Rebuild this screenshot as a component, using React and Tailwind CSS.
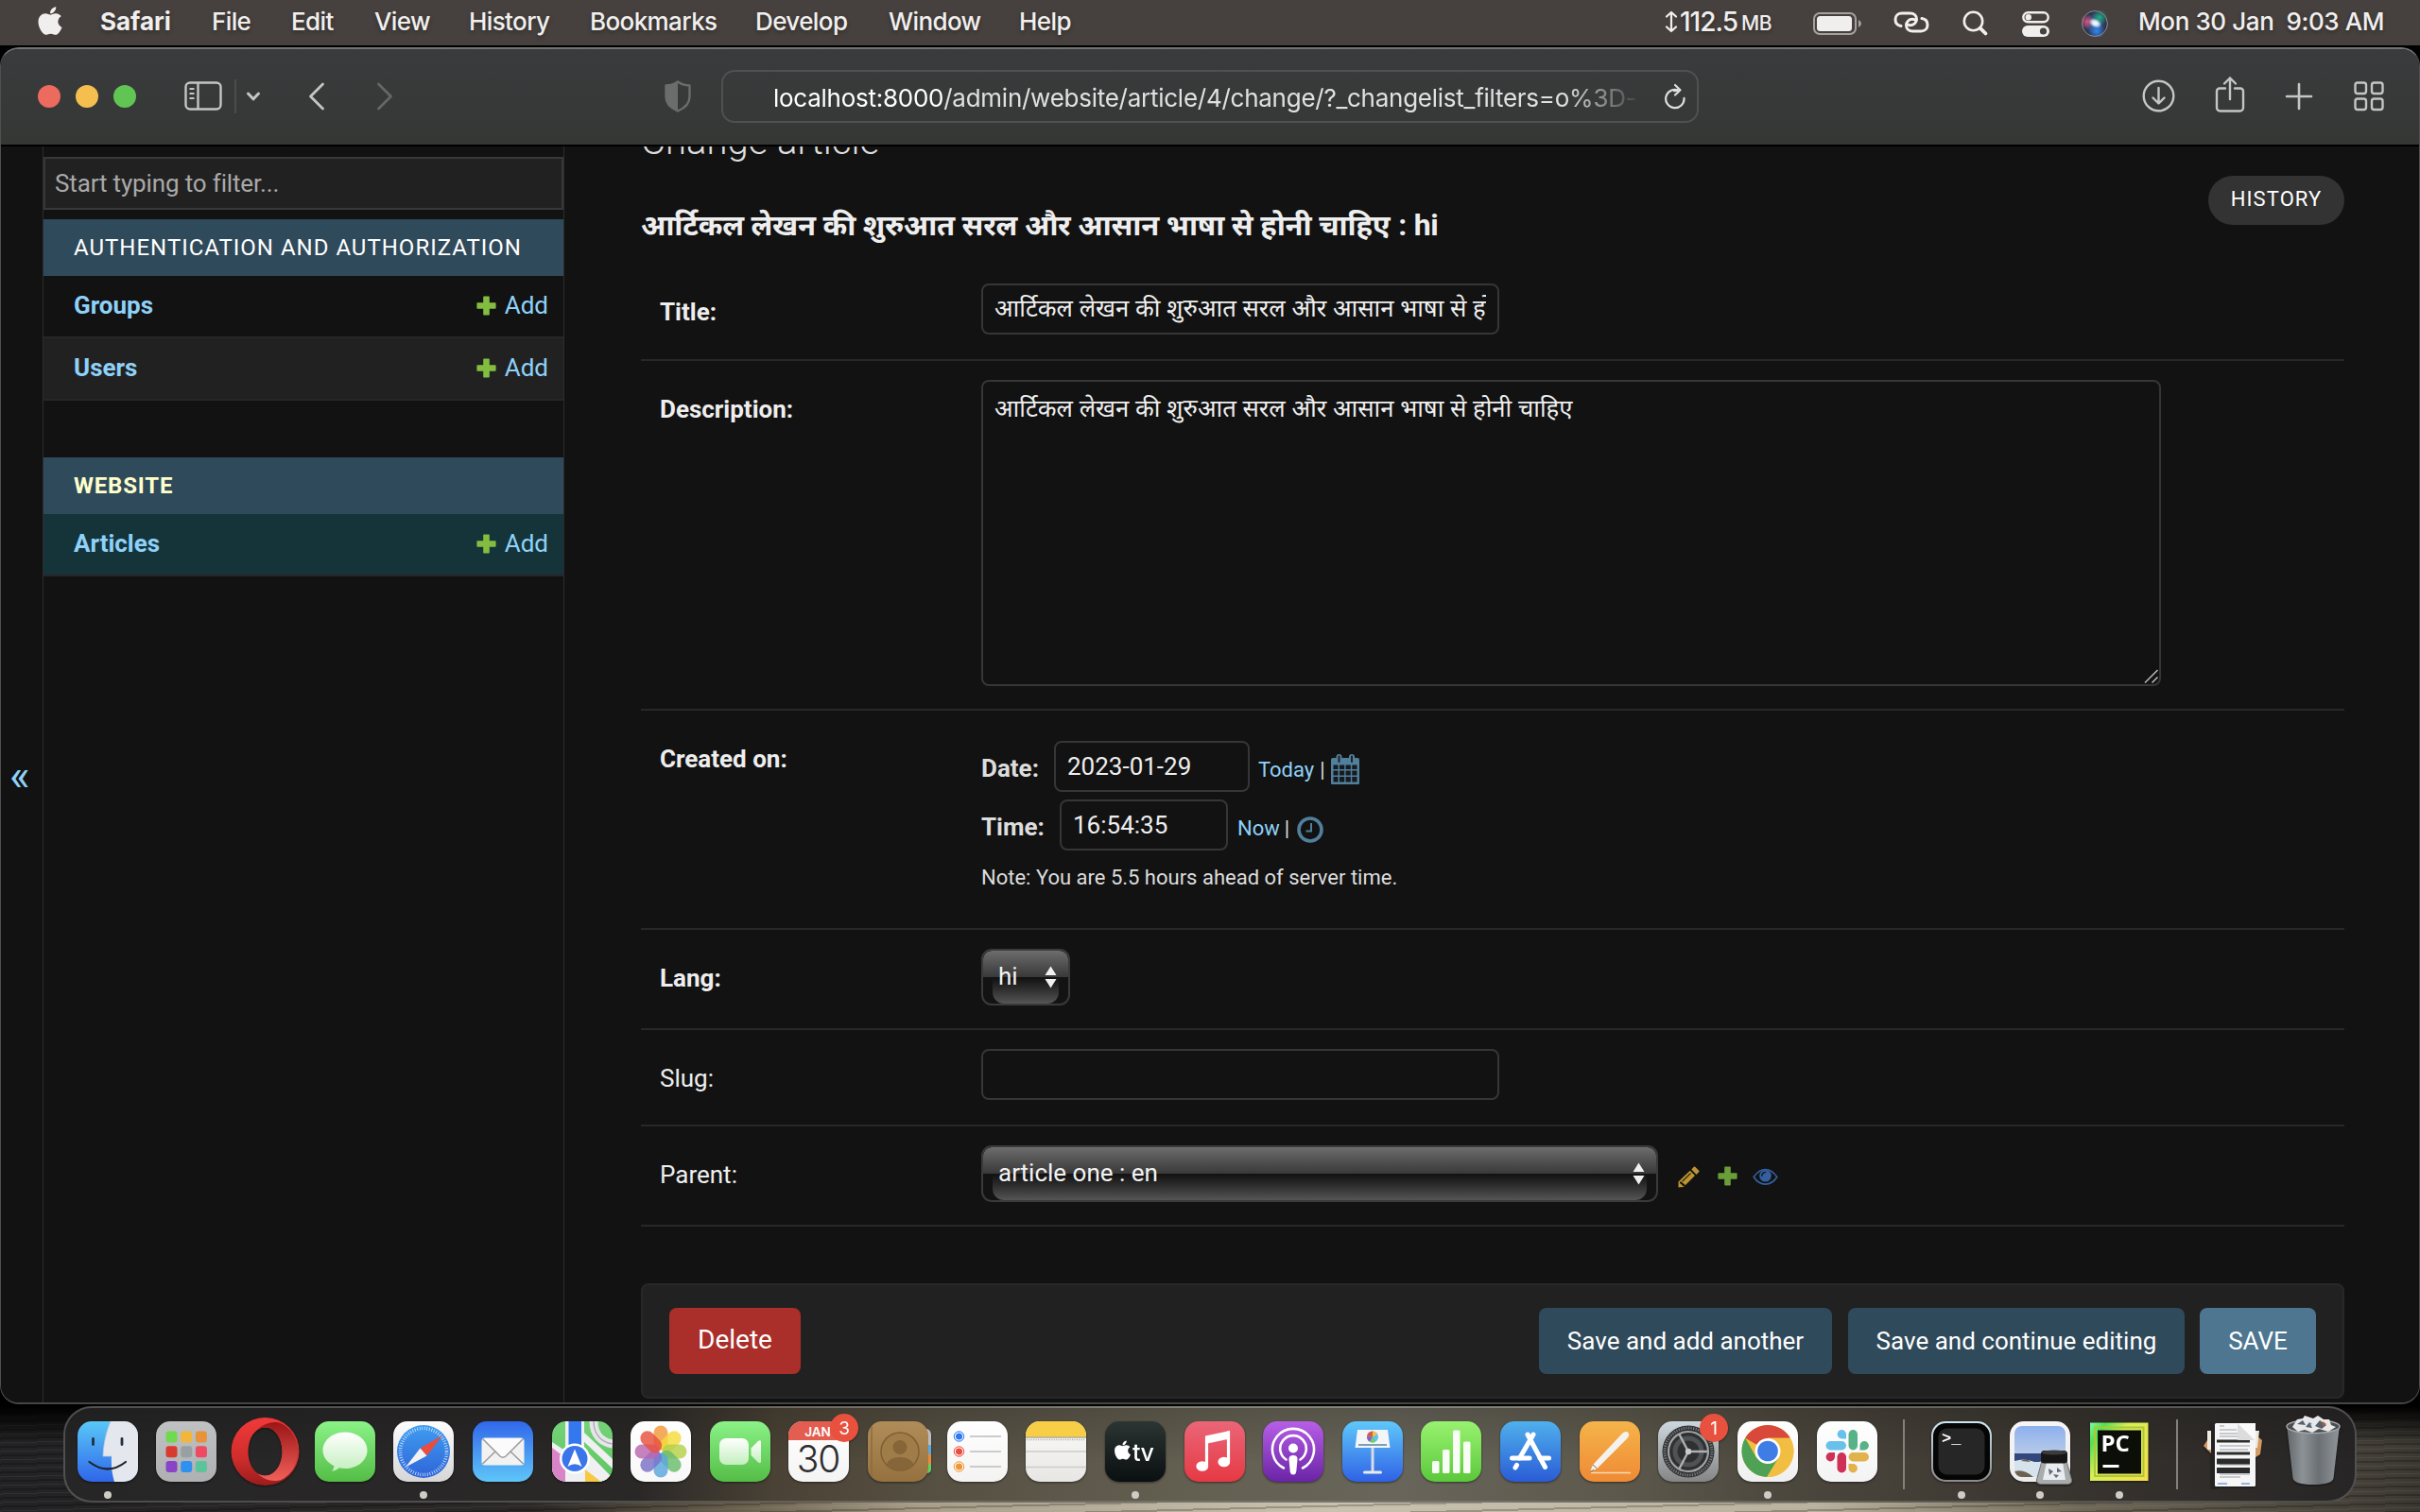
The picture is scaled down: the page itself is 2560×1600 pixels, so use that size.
import React from "react";
import { FaApple } from "react-icons/fa";

const HINDI = "आर्टिकल लेखन की शुरुआत सरल और आसान भाषा से होनी चाहिए";

/* ---------- macOS menu bar ---------- */

function MenuBar() {
  return (
    <div className="flex h-[48px] shrink-0 items-center bg-[#46413e] font-['Inter'] text-[26px] leading-[46px] text-[#f1efee] [text-shadow:0_2px_4px_rgba(0,0,0,0.35)]">
      <FaApple className="-mt-[4px] ml-[37px] h-[34px] w-[32px] shrink-0" />
      <div className="-mt-[2px] ml-[37px] flex whitespace-nowrap font-medium tracking-[-0.6px]">
        <span className="w-[118px] font-bold tracking-[0px]">Safari</span>
        <span className="w-[84px]">File</span>
        <span className="w-[88px]">Edit</span>
        <span className="w-[100px]">View</span>
        <span className="w-[128px]">History</span>
        <span className="w-[175px]">Bookmarks</span>
        <span className="w-[141px]">Develop</span>
        <span className="w-[138px]">Window</span>
        <span>Help</span>
      </div>
      <div className="-mt-[2px] ml-auto mr-[38px] flex items-center">
        <svg width="14" height="24" viewBox="0 0 14 24" fill="none" stroke="currentColor" strokeWidth="2.2" strokeLinecap="round" strokeLinejoin="round">
          <path d="M7 2V22M2 6.5L7 2l5 4.5M2 17.5L7 22l5-4.5" />
        </svg>
        <span className="ml-[2px] w-[65px] whitespace-nowrap text-[28px] font-medium tracking-[-1px]">112.5</span>
        <span className="mt-[4px] w-[76px] text-[21px] font-medium tracking-[-0.4px]">MB</span>
        <svg className="mt-[3px]" width="52" height="24" viewBox="0 0 52 24">
          <rect x="1" y="1" width="44" height="22" rx="6" fill="none" stroke="#a5a19f" strokeWidth="2" />
          <rect x="4" y="4" width="37" height="16" rx="3.5" fill="#f1efee" />
          <path d="M48 8q3 1.500 3 4t-3 4z" fill="#a5a19f" />
        </svg>
        <svg className="ml-[33px] mt-[1px]" width="38" height="24" viewBox="0 0 38 24" fill="none" stroke="currentColor" strokeWidth="3" strokeLinecap="round">
          <path d="M8 15.500C4 15 2 12 2 8.500C2 4.500 5 2 9 2h8.500c4.500 0 7 3 7 6.300c0 3.500-2.800 6.400-6.500 6.400c-1.800 0-3-.5-3.800-1.300" />
          <path d="M30 7.500c4 .5 6 3.500 6 7c0 4-3 6.500-7 6.500h-8.500c-4.500 0-7-3-7-6.300c0-3.500 2.800-6.400 6.500-6.400c1.800 0 3 .5 3.800 1.300" />
        </svg>
        <svg className="ml-[35px] mt-[3px]" width="28" height="28" viewBox="0 0 28 28" fill="none" stroke="currentColor" strokeLinecap="round">
          <circle cx="11.500" cy="11.500" r="9.700" strokeWidth="2.600" />
          <path d="M18.800 18.800L24.500 24.500" strokeWidth="3.800" />
        </svg>
        <svg className="ml-[35px] mt-[4px]" width="29" height="27" viewBox="0 0 29 27">
          <rect x="1.300" y="1.300" width="26.400" height="10" rx="5" fill="none" stroke="#f1efee" strokeWidth="2.400" />
          <circle cx="6.800" cy="6.300" r="3.200" fill="#f1efee" />
          <rect x="0" y="15" width="29" height="12" rx="6" fill="#f1efee" />
          <circle cx="22.500" cy="21" r="3.600" fill="#46413e" />
        </svg>
        <svg className="ml-[34px] mt-[3px]" width="28" height="28" viewBox="0 0 28 28">
          <defs>
            <radialGradient id="siriBase" cx="50%" cy="50%" r="50%">
              <stop offset="0" stopColor="#3c6aa8" />
              <stop offset="1" stopColor="#2a2c40" />
            </radialGradient>
            <radialGradient id="siriPink">
              <stop offset="0" stopColor="#e0507e" />
              <stop offset="1" stopColor="#e0507e" stopOpacity="0" />
            </radialGradient>
            <radialGradient id="siriGreen">
              <stop offset="0" stopColor="#1fae84" />
              <stop offset="1" stopColor="#1fae84" stopOpacity="0" />
            </radialGradient>
            <radialGradient id="siriBlue">
              <stop offset="0" stopColor="#2f86f5" />
              <stop offset="1" stopColor="#2f86f5" stopOpacity="0" />
            </radialGradient>
            <radialGradient id="siriGlow">
              <stop offset="0" stopColor="#ffffff" />
              <stop offset=".45" stopColor="#e6f3fb" stopOpacity=".9" />
              <stop offset="1" stopColor="#bfe4f5" stopOpacity="0" />
            </radialGradient>
          </defs>
          <circle cx="14" cy="14" r="13.500" fill="url(#siriBase)" />
          <circle cx="6" cy="12" r="8" fill="url(#siriPink)" />
          <circle cx="19" cy="7.500" r="8.500" fill="url(#siriGreen)" />
          <circle cx="16" cy="22" r="9" fill="url(#siriBlue)" />
          <ellipse cx="14.500" cy="13.500" rx="7.500" ry="5" fill="url(#siriGlow)" transform="rotate(25 14.500 13.500)" />
          <circle cx="14" cy="14" r="13.400" fill="none" stroke="#8c8f97" strokeWidth="1" />
        </svg>
        <span className="ml-[32px] w-[260px] whitespace-pre font-medium tracking-[-0.4px]">Mon 30 Jan  9:03 AM</span>
      </div>
    </div>
  );
}

/* ---------- Safari toolbar ---------- */

function Toolbar() {
  return (
    <div className="flex h-[103px] shrink-0 items-center border-b-2 border-black bg-linear-to-b from-[#3a3b3d] to-[#353735] pb-[2px] text-[#c4c5c5]">
      <div className="ml-[39px] flex gap-[16px]">
        <div className="h-[24px] w-[24px] rounded-full bg-[#ec6a5e]" />
        <div className="h-[24px] w-[24px] rounded-full bg-[#f4bf4f]" />
        <div className="h-[24px] w-[24px] rounded-full bg-[#61c554]" />
      </div>
      <svg className="ml-[51px]" width="40" height="32" viewBox="0 0 40 32" fill="none" stroke="currentColor" strokeWidth="2.400">
        <rect x="1.500" y="1.500" width="37" height="28" rx="4.500" />
        <path d="M14.500 1.500v28" />
        <path d="M5.500 8h5M5.500 13h5M5.500 18h5" strokeWidth="2" />
      </svg>
      <div className="ml-[13px] h-[36px] w-[2px] bg-[#4b4d4d]" />
      <svg className="ml-[10px]" width="16" height="12" viewBox="0 0 16 12" fill="none" stroke="currentColor" strokeWidth="3" strokeLinecap="round" strokeLinejoin="round">
        <path d="M2.500 3L8 8.800L13.500 3" />
      </svg>
      <svg className="ml-[49px]" width="20" height="32" viewBox="0 0 20 32" fill="none" stroke="currentColor" strokeWidth="2.800" strokeLinecap="round" strokeLinejoin="round">
        <path d="M16.500 3L3.500 16L16.500 29" />
      </svg>
      <svg className="ml-[52px] text-[#656767]" width="20" height="32" viewBox="0 0 20 32" fill="none" stroke="currentColor" strokeWidth="2.800" strokeLinecap="round" strokeLinejoin="round">
        <path d="M3.500 3L16.500 16L3.500 29" />
      </svg>
      <svg className="ml-[285px] text-[#6b6d6d]" width="30" height="34" viewBox="0 0 30 34">
        <path d="M15 1.500c4 3 8 3.800 12.500 4v12c0 7.500-5.500 12-12.500 15C8 29.500 2.500 25 2.500 17.500v-12C7 5.300 11 4.500 15 1.500z" fill="none" stroke="currentColor" strokeWidth="2.400" strokeLinejoin="round" />
        <path d="M15 1.500v31C8 29.500 2.500 25 2.500 17.500v-12C7 5.300 11 4.500 15 1.500z" fill="currentColor" />
      </svg>
      <div className="ml-[31px] flex h-[56px] w-[1034px] items-center rounded-[14px] border-2 border-[#4f5151]">
        <div className="ml-[53px] mt-[4px] w-[920px] overflow-hidden whitespace-nowrap font-['Inter'] text-[26px] leading-[40px] tracking-[-0.26px] text-[#dfe0e0] [mask-image:linear-gradient(to_right,black_91%,transparent)]">
          <span className="text-white">localhost:8000</span>/admin/website/article/4/change/?_changelist_filters=o%3D-
        </div>
        <svg className="mt-[1px] ml-[22px]" width="24" height="28" viewBox="0 0 24 28" fill="none" stroke="#dcdddd" strokeWidth="2.200" strokeLinecap="round" strokeLinejoin="round">
          <path d="M21.500 16.500A9.700 9.700 0 1 1 16.500 8H11.500" transform="rotate(-4 12 16)" />
          <path d="M12 2l5.500 5.200L12 12.500" />
        </svg>
      </div>
      <div className="ml-auto mr-[37px] flex items-center">
        <svg width="35" height="35" viewBox="0 0 35 35" fill="none" stroke="currentColor" strokeWidth="2.400" strokeLinecap="round" strokeLinejoin="round">
          <circle cx="17.500" cy="17.500" r="15.800" />
          <path d="M17.500 9v16M11.500 19.500l6 6 6-6" />
        </svg>
        <svg className="-mt-[4px] ml-[42px]" width="32" height="40" viewBox="0 0 32 40" fill="none" stroke="currentColor" strokeWidth="2.400" strokeLinecap="round" strokeLinejoin="round">
          <path d="M11 13.500H5a3 3 0 0 0-3 3V34a3.500 3.500 0 0 0 3.500 3.500h21A3.500 3.500 0 0 0 30 34V16.500a3 3 0 0 0-3-3h-6" />
          <path d="M16 25V2.500M10 8.500l6-6 6 6" />
        </svg>
        <svg className="ml-[42px]" width="30" height="30" viewBox="0 0 30 30" fill="none" stroke="currentColor" strokeWidth="2.600" strokeLinecap="round">
          <path d="M15 2v26M2 15h26" />
        </svg>
        <svg className="ml-[43px]" width="32" height="32" viewBox="0 0 32 32" fill="none" stroke="currentColor" strokeWidth="2.400">
          <rect x="1.500" y="1.500" width="11.500" height="11.500" rx="2.500" />
          <rect x="19" y="1.500" width="11.500" height="11.500" rx="2.500" />
          <rect x="1.500" y="18.500" width="11.500" height="11.500" rx="2.500" />
          <rect x="19" y="18.500" width="11.500" height="11.500" rx="2.500" />
        </svg>
      </div>
    </div>
  );
}

/* ---------- Django admin sidebar ---------- */

function PlusIcon({ className }) {
  return (
    <svg className={className} width="21" height="21" viewBox="0 0 21 21" fill="currentColor">
      <path d="M8 0.500h5a.8.8 0 0 1 .8.800V7.200h6a.8.8 0 0 1 .8.800v5a.8.8 0 0 1-.8.800h-6v6a.8.8 0 0 1-.8.700H8a.8.8 0 0 1-.8-.7v-6h-6A.8.8 0 0 1 .4 13V8a.8.8 0 0 1 .8-.8h6V1.300A.8.8 0 0 1 8 .5z" />
    </svg>
  );
}

function ModelRow({ name, tone }) {
  return (
    <div className={"flex h-[66px] items-center justify-between border-b-2 border-[#272727] pb-[2px] pl-[32px] pr-[16px] text-[#8fd1f8] " + tone}>
      <span className="text-[26px] font-bold">{name}</span>
      <span className="flex items-center text-[26px]">
        <PlusIcon className="mr-[9px] text-[#83bd40]" />
        Add
      </span>
    </div>
  );
}

function Sidebar() {
  return (
    <div className="flex w-[552px] shrink-0 flex-col border-x border-[#2c2c2c] pt-[11px]">
      <div className="flex h-[56px] items-center border-2 border-[#383838] bg-[#212121] pl-[10px] text-[26px] tracking-[-0.15px] text-[#a9a9a9]">
        Start typing to filter...
      </div>
      <div className="mt-[10px] flex h-[60px] items-center bg-[#2f4a5b] pl-[32px] text-[24px] tracking-[1px] text-white">
        AUTHENTICATION AND AUTHORIZATION
      </div>
      <ModelRow name="Groups" tone="bg-[#121212]" />
      <ModelRow name="Users" tone="bg-[#212121]" />
      <div className="mt-[60px] flex h-[60px] items-center bg-[#2f4a5b] pl-[32px] text-[24px] font-bold tracking-[0.8px] text-[#ffffcc]">
        WEBSITE
      </div>
      <ModelRow name="Articles" tone="bg-[#143439]" />
    </div>
  );
}

/* ---------- Change form ---------- */

function Row({ label, bold, height, children }) {
  return (
    <div className={"flex border-b-2 border-[#282828] pl-[20px] " + height}>
      <div className={"w-[340px] shrink-0 pt-[31px] text-[26px] leading-[40px] text-[#eeeeee] " + (bold ? "font-bold" : "")}>{label}</div>
      {children}
    </div>
  );
}

function GlossySelect({ value, width }) {
  return (
    <div className={"relative h-[60px] overflow-hidden rounded-[11px] border-2 border-[#3a3a3a] bg-[#131313] " + width}>
      <div className="h-[28px] rounded-t-[9px] bg-linear-to-b from-[#6d6d6d] to-[#393939]" />
      <div className="mx-[10px] h-[28px] rounded-b-[12px] bg-linear-to-b from-[#111111] to-[#555555]" />
      <div className="absolute inset-0 flex items-center justify-between pb-[1px] pl-[16px] pr-[12px] text-[26px] text-[#f2f2f2]">
        <span className="-mt-[1px]">{value}</span>
        <svg className="mt-[1px]" width="13" height="24" viewBox="0 0 13 24" fill="#f0f0f0">
          <path d="M6.500 0.500L12.500 10H.5zM6.500 23.500L.5 14h12z" />
        </svg>
      </div>
    </div>
  );
}

function CalendarIcon() {
  return (
    <svg className="ml-[6px] mt-[5px]" width="30" height="32" viewBox="0 0 30 32" fill="#527f9b">
      <path d="M2 4h26a2 2 0 0 1 2 2v25a1 1 0 0 1-1 1H1a1 1 0 0 1-1-1V6a2 2 0 0 1 2-2z" />
      <rect x="5.500" y="0" width="6" height="9" rx="3" />
      <rect x="19" y="0" width="6" height="9" rx="3" />
      <path d="M8.500 2.500v5.500M22 2.500v5.500" stroke="#1a2228" strokeWidth="2" strokeLinecap="round" />
      <g fill="#161b1f">
        <path d="M2.500 11.500h5v4.600h-5zM9 11.500h5.200v4.600H9zM15.600 11.500h5.200v4.600h-5.200zM22.300 11.500h5.200v4.600h-5.200z" />
        <path d="M2.500 17.600h5v4.800h-5zM9 17.600h5.200v4.800H9zM15.600 17.600h5.200v4.800h-5.200zM22.300 17.600h5.200v4.800h-5.200z" />
        <path d="M2.500 24h5v5.500h-5zM9 24h5.200v5.500H9zM15.600 24h5.200v5.500h-5.200zM22.300 24h5.200v5.500h-5.200z" />
      </g>
    </svg>
  );
}

function Form() {
  return (
    <div className="min-w-0 flex-1 overflow-hidden pl-[81px] pr-[79px]">
      <div className="flex h-[124px] justify-between">
        <div>
          <div className="-mt-[29px] text-[40px] font-light leading-[48px] text-[#dedede]">Change article</div>
          <div className="mt-[39px] flex items-baseline whitespace-nowrap text-[32px] font-bold leading-[48px] text-[#eeeeee]">
            <span className="font-['Noto_Sans'] text-[31px] tracking-[-0.3px]">{HINDI}</span>
            <span className="ml-[9px] tracking-[-0.3px]">: hi</span>
          </div>
        </div>
        <div className="mt-[31px] flex h-[52px] w-[144px] items-center justify-center rounded-full bg-[#333333] pb-[3px] text-[22px] tracking-[1.1px] text-white">
          HISTORY
        </div>
      </div>

      <Row label="Title:" bold height="h-[103px]">
        <div className="mt-[21px] flex h-[54px] w-[548px] items-center rounded-[8px] border-2 border-[#363636] px-[12px]">
          <div className="-mt-[2px] w-full overflow-hidden whitespace-nowrap font-['Noto_Sans'] text-[25.7px] leading-[50px] text-[#eeeeee]">{HINDI}</div>
        </div>
      </Row>

      <Row label="Description:" bold height="h-[370px]">
        <div className="relative mt-[20px] h-[324px] w-[1248px] rounded-[8px] border-2 border-[#363636] px-[12px] pt-[6px]">
          <div className="whitespace-nowrap font-['Noto_Sans'] text-[25.7px] leading-[44px] text-[#eeeeee]">{HINDI}</div>
          <svg className="absolute bottom-[-1px] right-[-1px]" width="18" height="18" viewBox="0 0 18 18" stroke="#b5b5b5" strokeWidth="1.600">
            <path d="M2 15.500L15.500 2M9.500 15.500L15.500 9.500" />
          </svg>
        </div>
      </Row>

      <Row label="Created on:" bold height="h-[232px]">
        <div className="pt-[32px] text-[#dddddd]">
          <div className="flex h-[54px] items-center">
            <span className="mt-[4px] w-[77px] text-[26px] font-bold">Date:</span>
            <div className="flex h-[54px] w-[207px] items-center rounded-[8px] border-2 border-[#363636] pl-[12px] text-[26px] text-[#eeeeee]">2023-01-29</div>
            <span className="ml-[9px] mt-[6px] text-[22px] text-[#8fd1f8]">Today</span>
            <span className="ml-[6px] mt-[6px] text-[22px]">|</span>
            <CalendarIcon />
          </div>
          <div className="mt-[8px] flex h-[54px] items-center">
            <span className="mt-[4px] w-[83px] text-[26px] font-bold">Time:</span>
            <div className="flex h-[54px] w-[178px] items-center rounded-[8px] border-2 border-[#363636] pl-[12px] text-[26px] text-[#eeeeee]">16:54:35</div>
            <span className="ml-[10px] mt-[6px] text-[22px] text-[#8fd1f8]">Now</span>
            <span className="ml-[5px] mt-[6px] text-[22px]">|</span>
            <svg className="ml-[8px] mt-[9px]" width="28" height="28" viewBox="0 0 28 28" fill="none" stroke="#527f9b">
              <circle cx="14" cy="14" r="12" strokeWidth="3.600" />
              <path d="M15 7v8.500H9.500" strokeWidth="2" />
            </svg>
          </div>
          <div className="mt-[14px] text-[22px] leading-[30px]">Note: You are 5.5 hours ahead of server time.</div>
        </div>
      </Row>

      <Row label="Lang:" bold height="h-[106px]">
        <div className="pt-[20px]">
          <GlossySelect value="hi" width="w-[94px]" />
        </div>
      </Row>

      <Row label="Slug:" height="h-[102px]">
        <div className="mt-[20px] h-[54px] w-[548px] rounded-[8px] border-2 border-[#363636]" />
      </Row>

      <Row label="Parent:" height="h-[106px]">
        <div className="flex items-start pt-[20px]">
          <GlossySelect value="article one : en" width="w-[716px]" />
          <svg className="ml-[21px] mt-[22px]" width="23" height="23" viewBox="0 0 23 23">
            <path d="M0.500 16.500L12.800 4.800L18 10L6 22L0.500 22.600z" fill="#bd9433" />
            <path d="M14.300 3.500L16.800 0.800q.7-.7 1.400 0L22.200 4.800q.7.700 0 1.400L19.500 8.900z" fill="#bd9433" />
            <path d="M4.500 16.300L13.500 7.500" stroke="#2f260f" strokeWidth="1.200" />
            <path d="M3 17.500l3.500 2.800" stroke="#151208" strokeWidth="2.200" strokeLinecap="round" />
          </svg>
          <PlusIcon className="ml-[19px] mt-[22px] text-[#6a9e38]" />
          <svg className="ml-[16px] mt-[24px]" width="27" height="20" viewBox="0 0 27 20">
            <path d="M1.200 9.500C5 4 9 1.500 13.500 1.500S22 4 25.800 9.500C22 15.200 18 17.200 13.500 17.200S5 15.200 1.200 9.500z" fill="none" stroke="#34609f" strokeWidth="1.700" />
            <circle cx="13.500" cy="8.200" r="6.300" fill="#34609f" />
            <path d="M9.800 8.200a4 4 0 0 1 3.700-3.700" fill="none" stroke="#121a26" strokeWidth="1.500" strokeLinecap="round" />
          </svg>
        </div>
      </Row>

      <div className="mt-[60px] flex h-[122px] items-center rounded-[8px] border-2 border-[#282828] bg-[#212121] px-[28px] text-[26px] text-white">
        <div className="flex h-[70px] w-[139px] items-center justify-center rounded-[8px] bg-[#aa2e29] pb-[2px] text-[28px]">Delete</div>
        <div className="ml-auto flex h-[70px] w-[310px] items-center justify-center rounded-[8px] bg-[#2f4a5b]">Save and add another</div>
        <div className="ml-[17px] flex h-[70px] w-[356px] items-center justify-center rounded-[8px] bg-[#2f4a5b]">Save and continue editing</div>
        <div className="ml-[16px] flex h-[70px] w-[123px] items-center justify-center rounded-[8px] bg-[#4e7690]">SAVE</div>
      </div>
    </div>
  );
}

/* ---------- Dock ---------- */

function Grad({ id, from, to }) {
  return (
    <linearGradient id={id} x1="0" y1="0" x2="0" y2="1">
      <stop offset="0" stopColor={from} />
      <stop offset="1" stopColor={to} />
    </linearGradient>
  );
}

function Tile({ id, from, to, children }) {
  return (
    <>
      <defs>
        <Grad id={id} from={from} to={to} />
        <clipPath id={id + "Clip"}>
          <rect width="64" height="64" rx="15" />
        </clipPath>
      </defs>
      <g clipPath={"url(#" + id + "Clip)"}>
        <rect width="64" height="64" fill={"url(#" + id + ")"} />
        {children}
      </g>
    </>
  );
}

const Finder = () => (
  <Tile id="finder" from="#5ac8f7" to="#2f66ea">
    <path d="M35 0C30 12 27.500 24 27 37h9c-.5 10 .5 19 3 27h25V0z" fill="#e4e8ee" />
    <path d="M35 0C30 12 27.500 24 27 37h9" fill="none" stroke="#b9c9dd" strokeWidth=".8" />
    <path d="M16.500 18.500v6M47 18.500v6" stroke="#20303f" strokeWidth="2.800" strokeLinecap="round" />
    <path d="M12.500 43Q32 58 51 43" fill="none" stroke="#20242c" strokeWidth="2.200" strokeLinecap="round" />
  </Tile>
);

const Launchpad = () => {
  const colors = ["#6fd94f", "#f2b63a", "#e8923a", "#d83a30", "#98a0a4", "#ee4a62", "#8a44c8", "#2f90f0", "#5cc49a"];
  return (
    <Tile id="launch" from="#bfc1c2" to="#aeb0b1">
      {colors.map((c, i) => (
        <rect key={i} x={10.500 + (i % 3) * 15.700} y={10.500 + Math.floor(i / 3) * 15.700} width="12" height="12" rx="3" fill={c} />
      ))}
    </Tile>
  );
};

const Opera = () => (
  <>
    <defs>
      <linearGradient id="operaA" x1="0" y1="0" x2="0" y2="1">
        <stop offset="0" stopColor="#f03a3a" />
        <stop offset=".6" stopColor="#d02c2c" />
        <stop offset="1" stopColor="#9b1c1c" />
      </linearGradient>
      <linearGradient id="operaB" x1="0" y1="0" x2="0" y2="1">
        <stop offset="0" stopColor="#9a1616" />
        <stop offset="1" stopColor="#f0605a" />
      </linearGradient>
    </defs>
    <path fillRule="evenodd" d="M31.500-4a36 36 0 1 0 0 72a36 36 0 1 0 0-72zM31.500 6.500c10 0 18 11 18 25.500s-8 25.500-18 25.500S13.500 46.500 13.500 32S21.500 6.500 31.500 6.500z" fill="url(#operaA)" />
    <path fillRule="evenodd" d="M22.500 9.500C29 3 39-1 48 2C60 8 66 19 66 32s-6 24-17.500 30C39 65 29 61 22.500 54.500C25.500 56.800 28.500 57.500 31.500 57.500C41.500 57.500 49.500 46.500 49.500 32S41.500 6.500 31.500 6.500C28.500 6.500 25.500 7.300 22.500 9.500z" fill="url(#operaB)" />
  </>
);

const Messages = () => (
  <Tile id="msg" from="#8bf287" to="#54bd46">
    <defs>
      <Grad id="msgB" from="#ffffff" to="#c3efbd" />
    </defs>
    <path d="M32 11.500c13 0 23.500 8.500 23.500 19.200S45 50 32 50c-2 0-4-.2-6-.7c-2.500 2-5 3.200-8 3.500c1.500-1.800 2.200-3.500 2.300-5.600C13 43.500 8.500 37.600 8.500 30.700C8.500 20 19 11.500 32 11.500z" fill="url(#msgB)" />
  </Tile>
);

const Safari = () => (
  <Tile id="saf" from="#fdfdfd" to="#d6d6d6">
    <defs>
      <Grad id="safB" from="#3f9df0" to="#2f64d8" />
    </defs>
    <circle cx="32" cy="32" r="28" fill="url(#safB)" />
    <circle cx="32" cy="32" r="24.500" fill="none" stroke="#cfe4ff" strokeWidth="3.600" strokeDasharray="0.8 1.770" />
    <path d="M52 15L35.500 36.500L28.500 28.500z" fill="#ec4b3d" />
    <path d="M13 48.500L28.500 28.500L35.500 36.500z" fill="#f2f2f2" />
  </Tile>
);

const Mail = () => (
  <Tile id="mail" from="#3167ea" to="#5fc6f8">
    <rect x="9.500" y="17.500" width="45" height="29" rx="3.500" fill="#f2f2f2" />
    <path d="M10.500 45L25 31M53.500 45L39 31" stroke="#9a9a9a" strokeWidth="1.500" />
    <path d="M10.500 18.500L29 37q3 2.500 6 0L53.500 18.500" fill="#fbfbfb" stroke="#9a9a9a" strokeWidth="1.500" />
  </Tile>
);

const Maps = () => (
  <Tile id="maps" from="#74d377" to="#5fc463">
    <path d="M0 22L64 64H0z" fill="#f0f0f2" />
    <path d="M0 28L16 40V64H0z" fill="#d884c6" />
    <path d="M30 18L64 50V40L34 12z" fill="#f0f0f2" />
    <path d="M31 26L64 60V64H50L30 44z" fill="#f0f0f2" />
    <path d="M35 64V51l17 13z" fill="#f5c944" />
    <rect x="14" y="0" width="20" height="64" fill="#f0f0f2" />
    <rect x="17.500" y="0" width="13.500" height="34" fill="#3478f0" />
    <path d="M44 0c0 14 8 22 20 24" fill="none" stroke="#e6e6ea" strokeWidth="9" />
    <path d="M44 0c0 14 8 22 20 24" fill="none" stroke="#aeb0b8" strokeWidth="1.500" />
    <circle cx="24" cy="39.500" r="16" fill="#ffffff" />
    <circle cx="24" cy="39.500" r="13.500" fill="#3a76ea" />
    <path d="M24 29.500L31.500 48q-7.500-5.500-15 0z" fill="#ffffff" />
  </Tile>
);

const Photos = () => {
  const petals = ["#f19a38", "#f4dc3c", "#b5cf48", "#69bd6b", "#5aa6dd", "#7b72c8", "#b866b0", "#e8503f"];
  return (
    <Tile id="photos" from="#ffffff" to="#f8f8f8">
      {petals.map((c, i) => (
        <rect key={c} x="24.500" y="4.500" width="15" height="26" rx="7.500" fill={c} opacity=".82" transform={"rotate(" + i * 45 + " 32 32)"} />
      ))}
    </Tile>
  );
};

const FaceTime = () => (
  <Tile id="ft" from="#8bf287" to="#54bd46">
    <defs>
      <Grad id="ftB" from="#ffffff" to="#c3efbd" />
    </defs>
    <rect x="10" y="18" width="31" height="28" rx="7" fill="url(#ftB)" />
    <path d="M43.500 28.500L51 21q3-2 3 1v20.500q0 3-3 1l-7.500-7.500z" fill="url(#ftB)" />
  </Tile>
);

const Badge = ({ value }) => (
  <>
    <circle cx="59" cy="7" r="15" fill="#e9513f" />
    <text x="59" y="14" textAnchor="middle" fontFamily="Inter" fontSize="19" fill="#ffffff">{value}</text>
  </>
);

const Calendar = () => (
  <>
    <Tile id="cal" from="#ffffff" to="#f4f4f4">
      <rect width="64" height="20" fill="#e35d50" />
      <text x="31" y="15.500" textAnchor="middle" fontFamily="Inter" fontSize="13.500" fontWeight="600" fill="#ffffff">JAN</text>
      <text x="31.500" y="54" textAnchor="middle" fontFamily="Inter" fontSize="39" fontWeight="300" letterSpacing="-1" fill="#2d2d2d">30</text>
    </Tile>
    <Badge value="3" />
  </>
);

const Contacts = () => (
  <>
    <path d="M60 8h3q4 2 4 6v11h-7z" fill="#bdbdbd" />
    <path d="M60 25h7v10h-7z" fill="#5aa9dc" />
    <path d="M60 35h7v10h-7z" fill="#ee8a36" />
    <path d="M60 45h7v6q0 3-4 4h-3z" fill="#62cf62" />
    <Tile id="con" from="#b08d58" to="#95713f">
      <path d="M4 0v64" stroke="#8d6b3c" strokeWidth="1.500" />
      <circle cx="34" cy="32" r="20" fill="#a07c49" stroke="#7e5f35" strokeWidth="1.500" />
      <circle cx="34" cy="27.500" r="7.500" fill="#866539" />
      <path d="M19.500 45.500q3-7.500 14.500-7.500t14.500 7.500Q43 52 34 52t-14.500-6.500z" fill="#866539" />
    </Tile>
  </>
);

const Reminders = () => (
  <Tile id="rem" from="#ffffff" to="#f4f3f2">
    {["#2f78f0", "#ea4d3d", "#ee9635"].map((c, i) => (
      <g key={c}>
        <circle cx="12.500" cy={16 + i * 16} r="4.800" fill={c} />
        <circle cx="12.500" cy={16 + i * 16} r="4.200" fill="none" stroke="#ffffff" strokeWidth="1.200" />
        <circle cx="12.500" cy={16 + i * 16} r="5.200" fill="none" stroke={c} strokeWidth="1" />
        <path d={"M24 " + (16 + i * 16) + "h33"} stroke="#bcbcc0" strokeWidth="1.600" />
      </g>
    ))}
  </Tile>
);

const Notes = () => (
  <Tile id="notes" from="#fbfbfa" to="#e7e6e3">
    <rect width="64" height="16.500" fill="#f7ce46" />
    <path d="M0 17h64" stroke="#b4a988" strokeWidth="1.300" />
    <path d="M1 19.500h62" stroke="#a9a9a9" strokeWidth="1.300" strokeDasharray="1 1.400" />
    <path d="M0 32h64M0 48.500h64" stroke="#cdccc9" strokeWidth="1.500" />
  </Tile>
);

const AppleTV = () => (
  <Tile id="tv" from="#2b3532" to="#0b0f11">
    <FaApple x="7" y="19" size={23} color="#ffffff" />
    <text x="29" y="42" fontFamily="Inter" fontSize="25" fontWeight="500" letterSpacing="-0.5" fill="#ffffff">tv</text>
  </Tile>
);

const Music = () => (
  <Tile id="music" from="#ea6678" to="#e63944">
    <path d="M46.500 10.500v32" stroke="#ffffff" strokeWidth="3.200" />
    <path d="M23.500 16v31" stroke="#ffffff" strokeWidth="3.200" />
    <path d="M22 15.500L48 10v8.500L22 24z" fill="#ffffff" />
    <ellipse cx="18.800" cy="47.500" rx="6.400" ry="5.300" fill="#ffffff" />
    <ellipse cx="41.800" cy="43" rx="6.400" ry="5.300" fill="#ffffff" />
  </Tile>
);

const Podcasts = () => (
  <Tile id="pod" from="#b65fe6" to="#6b24a6">
    <g fill="none" stroke="#ffffff" strokeWidth="2.600" strokeLinecap="round">
      <path d="M22 49.500A22 22 0 1 1 42 49.500" />
      <path d="M24.500 40.500A13.800 13.800 0 1 1 39.500 40.500" />
    </g>
    <circle cx="32" cy="28.500" r="5" fill="#ffffff" />
    <path d="M27.500 40q0-4 4.500-4t4.500 4l-1.200 13q-.5 3.500-3.300 3.500T28.700 53z" fill="#ffffff" />
  </Tile>
);

const Keynote = () => (
  <Tile id="key" from="#5fc8fa" to="#2f62e6">
    <rect x="30.500" y="28" width="3" height="26" fill="#d9dce2" />
    <rect x="22" y="52.500" width="20" height="3" rx="1.500" fill="#e9ebef" />
    <path d="M16 9h32l2.500 19h-37z" fill="#f4f5f7" />
    <path d="M17 25h30" stroke="#7da0b8" strokeWidth="2" />
    <circle cx="32" cy="16.500" r="6" fill="#5ec6e8" />
    <path d="M32 16.500v-6a6 6 0 0 0-6 6z" fill="#e2574c" />
    <path d="M32 16.500h-6a6 6 0 0 0 3 5.200z" fill="#8a5fc0" />
    <path d="M32 16.500v-6a6 6 0 0 1 5.200 3z" fill="#f3c245" />
    <path d="M32 16.500l-3 5.200a6 6 0 0 0 6 0z" fill="#6fcf60" />
  </Tile>
);

const Numbers = () => (
  <Tile id="num" from="#98f26f" to="#5cc83c">
    <g fill="#f8fdf6">
      <rect x="12" y="42" width="7.500" height="13" rx="1.500" />
      <rect x="23" y="30" width="7.500" height="25" rx="1.500" />
      <rect x="34" y="9.500" width="7.500" height="45.500" rx="1.500" />
      <rect x="45" y="21.500" width="7.500" height="33.500" rx="1.500" />
    </g>
  </Tile>
);

const AppStore = () => (
  <Tile id="store" from="#4fb0ec" to="#2a5cd6">
    <g stroke="#ffffff" strokeWidth="5" strokeLinecap="round">
      <path d="M12.500 39H31" />
      <path d="M42 39h9.500" />
      <path d="M35 14L20.500 39" />
      <path d="M29 14L47.500 48.500" />
      <path d="M17.500 46.500L16 49" />
    </g>
  </Tile>
);

const Pages = () => (
  <Tile id="pages" from="#f5b44a" to="#ef8a35">
    <path d="M12 54.500h42" stroke="#fbd9ae" strokeWidth="1.600" />
    <path d="M11 53.500l3-7.500L45 13q3-3 6-1.500q2.500 3-.5 6.500L18.500 50z" fill="#f5f2ee" />
    <path d="M14 46l4.500 4M11 53.500l4-2" stroke="#7a6a58" strokeWidth="1" />
  </Tile>
);

const Settings = () => (
  <>
    <Tile id="set" from="#cdd8de" to="#858585">
      <circle cx="32" cy="32" r="27.500" fill="#2e3032" />
      <circle cx="32" cy="32" r="25" fill="none" stroke="#77797b" strokeWidth="3" strokeDasharray="1.300 1.300" />
      <circle cx="32" cy="32" r="21" fill="#2e3032" stroke="#a0a3a5" strokeWidth="2.200" />
      <circle cx="32" cy="32" r="14" fill="none" stroke="#505356" strokeWidth="5" />
      <path d="M32 32L22.500 14M32 32L22.500 50M32 32H52" stroke="#aeb1b3" strokeWidth="2.400" />
      <circle cx="32" cy="32" r="3.200" fill="#c8cbcd" />
    </Tile>
    <Badge value="1" />
  </>
);

const Chrome = () => (
  <Tile id="chr" from="#ffffff" to="#efefef">
    <circle cx="32" cy="31.500" r="27.500" fill="#f1be42" />
    <path d="M32 31.500L8.200 17.700A27.500 27.500 0 0 1 55.800 17.700H32z" fill="#d8493c" />
    <path d="M8.200 17.700A27.500 27.500 0 0 0 31 59L43.500 38.500L32 31.500L20 38.500z" fill="#4fa155" />
    <path d="M55.800 17.700H32V31.500L43.800 38.500L31.500 59A27.500 27.500 0 0 0 55.800 17.700z" fill="#f1be42" />
    <circle cx="32" cy="31.500" r="13.500" fill="#ffffff" />
    <circle cx="32" cy="31.500" r="10.800" fill="#3f7ce6" />
  </Tile>
);

const Slack = () => (
  <Tile id="slack" from="#ffffff" to="#f3f3f3">
    <g fill="#68c1ea">
      <rect x="9.500" y="21" width="21.500" height="9.500" rx="4.750" />
      <path d="M31 18.500h-4.700a4.700 4.700 0 1 1 4.700-4.700z" />
    </g>
    <g fill="#58b287">
      <rect x="33.500" y="9" width="9.500" height="21.500" rx="4.750" />
      <path d="M45.500 30.500v-4.700a4.700 4.700 0 1 1 4.700 4.700z" />
    </g>
    <g fill="#e2b24c">
      <rect x="33.500" y="33" width="21.500" height="9.500" rx="4.750" />
      <path d="M33.500 45h4.700a4.700 4.700 0 1 1-4.700 4.700z" />
    </g>
    <g fill="#cf3058">
      <rect x="21.500" y="33" width="9.500" height="21.500" rx="4.750" />
      <path d="M19 33v4.700a4.700 4.700 0 1 1-4.700-4.700z" />
    </g>
  </Tile>
);

const Terminal = () => (
  <Tile id="term" from="#cfe6f2" to="#8a8a8a">
    <rect x="2" y="2" width="60" height="60" rx="13.500" fill="#050505" />
    <rect x="7.500" y="7.500" width="49" height="49" rx="9" fill="#262626" />
    <text x="11" y="23" fontFamily="Liberation Mono" fontSize="17" fontWeight="700" fill="#ffffff">&gt;_</text>
  </Tile>
);

const Preview = () => (
  <>
    <Tile id="prev" from="#f6f6f6" to="#ececec">
      <defs>
        <Grad id="prevSky" from="#8db0ee" to="#b9cbe8" />
        <clipPath id="prevIn">
          <rect x="5" y="5" width="54" height="54" rx="8" />
        </clipPath>
      </defs>
      <g clipPath="url(#prevIn)">
        <rect x="5" y="5" width="54" height="30" fill="url(#prevSky)" />
        <rect x="5" y="34" width="54" height="9" fill="#34467e" />
        <path d="M5 42q10-3 18 0t12-1h24v18H5z" fill="#d5e4ec" />
        <path d="M12 42q5-4 10 1zM5 53q10-3 20 6H5z" fill="#6a6350" />
      </g>
    </Tile>
    <path d="M34 42h26l5.500 20q.5 4-4 4.500H33q-5-.5-4.500-4.500z" fill="#a9acac" stroke="#6f7170" strokeWidth="1" />
    <path d="M39 43h17l3 19H35z" fill="#e9edef" />
    <path d="M41 50l5 3-4 4zM50 49l5 4-5 1zM46 56l6 1-3 3z" fill="#5f6a78" />
    <rect x="33" y="31" width="28" height="13.500" rx="3.500" fill="#161616" />
    <ellipse cx="47" cy="33" rx="13" ry="2.500" fill="#3c3c3c" />
  </>
);

const PyCharm = () => (
  <>
    <defs>
      <linearGradient id="pcA" x1="0" y1="0" x2="1" y2=".7">
        <stop offset="0" stopColor="#7dfaa0" />
        <stop offset=".18" stopColor="#54e052" />
        <stop offset=".45" stopColor="#d8ee58" />
        <stop offset="1" stopColor="#f3e04c" />
      </linearGradient>
    </defs>
    <rect x="1" y="1.500" width="61.500" height="61.500" fill="url(#pcA)" />
    <rect x="6" y="6.500" width="51.500" height="51.500" fill="none" stroke="#a9c93a" strokeWidth="2" />
    <rect x="9" y="9.500" width="46" height="46" fill="#0b0f08" />
    <text x="12.500" y="32" fontFamily="Open Sans" fontSize="24" fontWeight="700" fill="#ffffff">PC</text>
    <rect x="14.500" y="46" width="17" height="3" fill="#ffffff" />
  </>
);

const Documents = () => (
  <>
    <path d="M0 26L8 14v20zM62 20l-10-8v28l8-5z" fill="#d39a63" />
    <path d="M4 10h6v20H4zM52 10h7l-2 18h-5z" fill="#efe9df" />
    <rect x="8" y="2" width="7" height="68" fill="#232323" />
    <rect x="12" y="2" width="43" height="67" rx="1.500" fill="#f6f6f6" />
    <path d="M17 5h5M17 9h18M17 13h20M17 16h20M17 26h32M17 30h30M17 46h32M17 56h32M17 59h22" stroke="#9a9fa6" strokeWidth="1" />
    <path d="M14 21h35M14 34h35" stroke="#2b2b2b" strokeWidth="3" />
    <path d="M14 42.500h35M14 52h35" stroke="#2b2b2b" strokeWidth="6" />
    <path d="M15 66h10M40 66h9" stroke="#7b9fd6" strokeWidth="1.500" />
    <path d="M36 2v18h18z" fill="#dcdcdc" />
    <path d="M36 2h19v18z" fill="#fafafa" />
  </>
);

const Trash = () => (
  <>
    <defs>
      <linearGradient id="trashBody" x1="0" y1="0" x2="1" y2="0">
        <stop offset="0" stopColor="#62676b" />
        <stop offset=".3" stopColor="#8d9296" />
        <stop offset=".6" stopColor="#6b7074" />
        <stop offset="1" stopColor="#909599" />
      </linearGradient>
    </defs>
    <path d="M4 4L60 4L53.500 60q-1 7-21.500 7t-21.500-7z" fill="url(#trashBody)" />
    <ellipse cx="32" cy="5.500" rx="28" ry="7" fill="#4a4e51" stroke="#a4a8ab" strokeWidth="1.500" />
    <path d="M10 6L15-2l6-1 2-3 9 3 5-3 6 4 6 0 2 6 5 2-8 5-10-3-7 4-8-3-7 2z" fill="#e9e9e9" />
    <path d="M15 3l6-4 3 5zM34 5l5-6 7 5-5 4zM24 6l4-5 3 6z" fill="#55616e" />
    <path d="M42 0l4 3-4 2z" fill="#c05d2c" />
    <path d="M28 1l3 2-3 1z" fill="#3e8ed0" />
  </>
);

function DockItem({ icon: Icon, running }) {
  return (
    <div className="flex w-[83.640px] shrink-0 flex-col items-center">
      <svg className="mt-[14px] overflow-visible drop-shadow-[0_1px_1px_rgba(0,0,0,0.5)]" width="64" height="64" viewBox="0 0 64 64">
        <Icon />
      </svg>
      {running && <div className="mt-[10px] h-[8px] w-[8px] rounded-full bg-[#cfccc6]" />}
    </div>
  );
}

function DockSeparator() {
  return (
    <div className="flex w-[37.500px] shrink-0 justify-center pt-[12px]">
      <div className="h-[74px] w-[2px] bg-[#85817a]" />
    </div>
  );
}

function Dock() {
  const apps = [
    [Finder, true], [Launchpad], [Opera], [Messages], [Safari, true], [Mail], [Maps], [Photos], [FaceTime], [Calendar], [Contacts],
    [Reminders], [Notes], [AppleTV, true], [Music], [Podcasts], [Keynote], [Numbers], [AppStore], [Pages], [Settings], [Chrome, true], [Slack],
  ];
  const recent = [[Terminal, true], [Preview, true], [PyCharm, true]];
  return (
    <div className="ml-[67px] mt-[2px] flex h-[102px] w-[2426px] rounded-[30px] border-2 border-[#ffffff]/20 bg-[linear-gradient(to_bottom,rgba(0,0,0,0.16),rgba(0,0,0,0)_60%),linear-gradient(to_right,#272627_0%,#2a2827_25%,#4a4235_31%,#565043_38%,#646052_50%,#68655a_58%,#5c584c_68%,#4d483e_75%,#3a3630_86%,#272525_100%)] pl-[3px]">
      {apps.map(([icon, running], i) => <DockItem key={i} icon={icon} running={running} />)}
      <DockSeparator />
      {recent.map(([icon, running], i) => <DockItem key={i} icon={icon} running={running} />)}
      <DockSeparator />
      <DockItem icon={Documents} />
      <DockItem icon={Trash} />
    </div>
  );
}

export default function App() {
  return (
    <div className="flex h-[1600px] w-[2560px] flex-col overflow-hidden bg-[linear-gradient(to_bottom,#000_0,#000_93%,transparent_95.500%),repeating-linear-gradient(178.500deg,rgba(0,0,0,0.22)_0_2px,transparent_2px_5px,rgba(255,255,255,0.06)_5px_6px,transparent_6px_9px),linear-gradient(to_right,#232224_0%,#2b2826_22%,#6d6350_31%,#a79d88_38%,#c8c1ae_55%,#b9b19d_75%,#6f6857_86%,#3b3832_100%)]">
      <MenuBar />
      <div className="mt-[2px] flex h-[1436px] shrink-0 flex-col overflow-hidden rounded-[20px] border-x border-y-2 border-x-[#505050] border-b-[#444545] border-t-[#737575] bg-[#121212]">
        <Toolbar />
        <div className="flex min-h-0 flex-1 bg-[#121212] font-['Roboto']">
          <div className="w-[44px] shrink-0 pl-[9px] pt-[642px] text-[46px] leading-[46px] text-[#8fd1f8]">«</div>
          <Sidebar />
          <Form />
        </div>
      </div>
      <Dock />
    </div>
  );
}
